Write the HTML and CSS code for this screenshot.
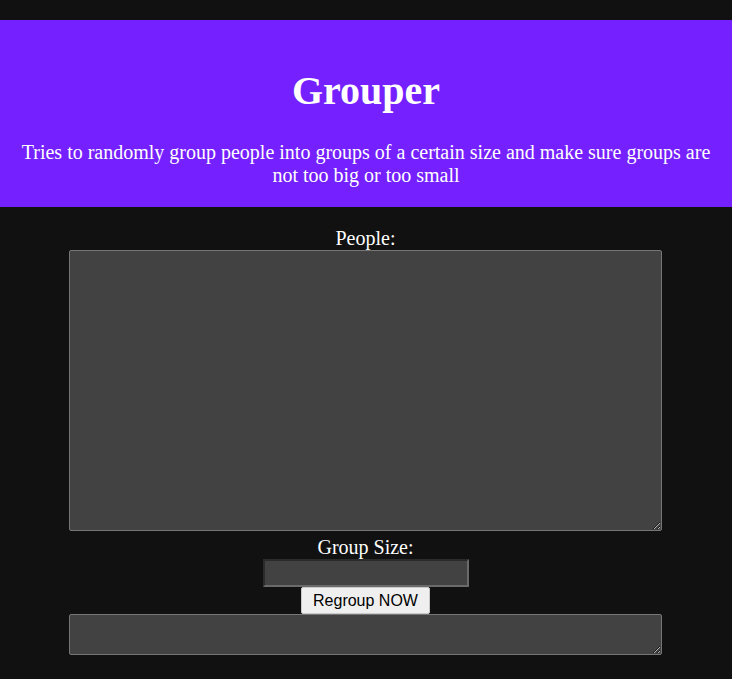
FILE: index.html
```html
<!DOCTYPE html>
<html lang="en">
<head>
<meta charset="utf-8">
<title>Grouper</title>
<link rel="stylesheet" href="styles.css">
</head>
<body>
<header class="hero">
  <h1 class="hero-title">Grouper</h1>
  <p class="hero-sub">Tries to randomly group people into groups of a certain size and make sure groups are not too big or too small</p>
</header>
<main class="form">
  <label class="field-label" for="people">People:</label>
  <textarea id="people" class="people-input"></textarea>
  <label class="field-label size-label" for="size">Group Size:</label>
  <input id="size" class="size-input" type="text">
  <button class="regroup-btn" type="button">Regroup NOW</button>
  <textarea class="result-output"></textarea>
</main>
</body>
</html>
```

FILE: styles.css
```css
html, body {
  margin: 0;
  padding: 0;
}

body {
  background: #111111;
  color: #ffffff;
  font-family: "Liberation Serif", "Times New Roman", serif;
  font-size: 20px;
  line-height: 23px;
}

.hero {
  margin-top: 20px;
  background: #7420ff;
  padding: 48px 20px 20px;
  text-align: center;
}

.hero-title {
  margin: 0;
  font-size: 40px;
  line-height: 46px;
  font-weight: bold;
}

.hero-sub {
  margin: 27px 0 0;
  font-size: 20px;
  line-height: 23px;
}

.form {
  display: flex;
  flex-direction: column;
  align-items: center;
  padding-top: 20px;
  padding-right: 1px;
}

.field-label {
  display: block;
  height: 23px;
}

.size-label {
  margin-top: 5px;
}

.people-input,
.result-output {
  box-sizing: border-box;
  width: 593px;
  margin: 0;
  background: #424242;
  color: #ffffff;
  border: 1px solid #767676;
  border-radius: 2px;
  padding: 2px;
}

.people-input {
  height: 281px;
}

.result-output {
  height: 41px;
}

.size-input {
  box-sizing: border-box;
  width: 206px;
  height: 28px;
  margin: 0;
  padding: 1px 2px;
  background: #424242;
  color: #ffffff;
  border-style: solid;
  border-width: 2px;
  border-color: #2b2b2b #6a6a6a #6a6a6a #2b2b2b;
}

.regroup-btn {
  box-sizing: border-box;
  width: 129px;
  height: 27px;
  margin: 0;
  padding: 1px 6px;
  font-family: "Liberation Sans", Arial, sans-serif;
  font-size: 16px;
  color: #000000;
  background: #efefef;
  border: 1px solid #c8c8c8;
  border-radius: 2px;
}
```
